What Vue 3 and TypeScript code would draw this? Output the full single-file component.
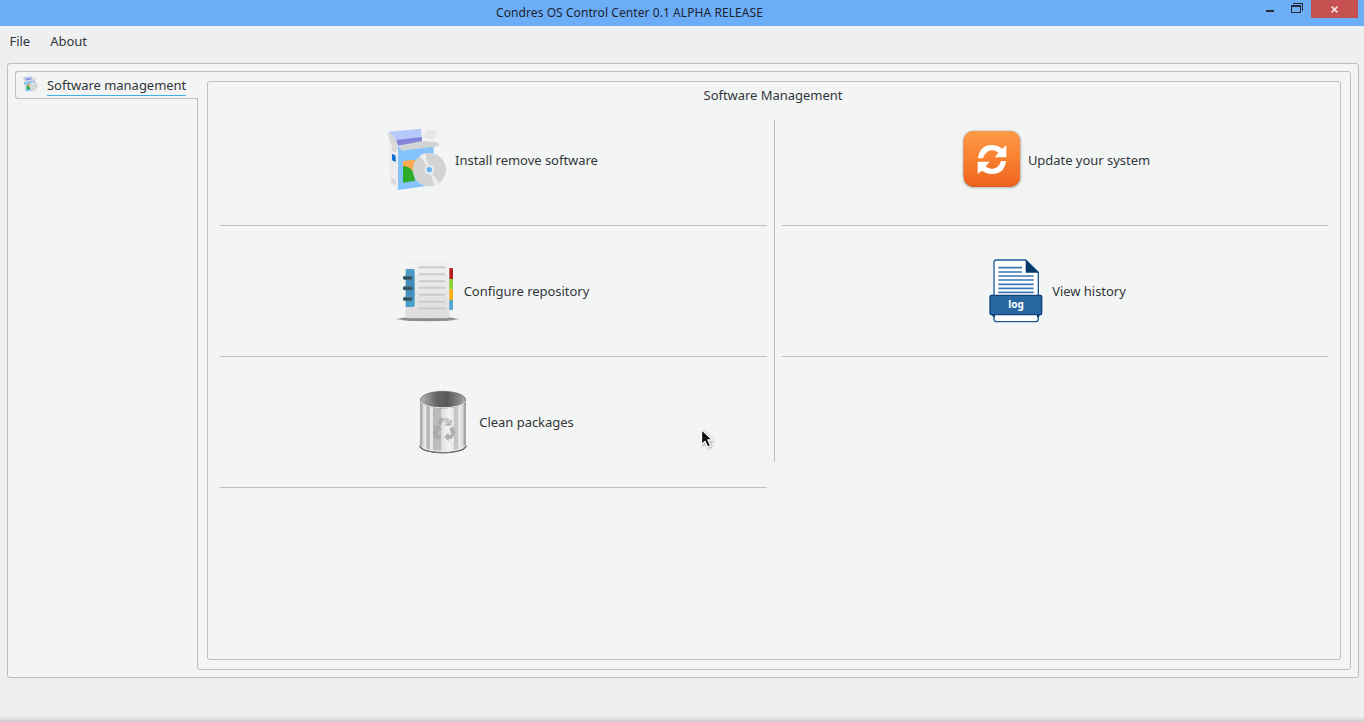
<script setup lang="ts">
type IconName = 'install' | 'update' | 'repository' | 'history' | 'clean'

interface Action {
  label: string
  icon: IconName
  viewBox: string
}

const leftActions: Action[] = [
  { label: 'Install remove software', icon: 'install', viewBox: '21 24 192 192' },
  { label: 'Configure repository', icon: 'repository', viewBox: '21 15 192 192' },
  { label: 'Clean packages', icon: 'clean', viewBox: '9 24 192 192' },
]

const rightActions: Action[] = [
  { label: 'Update your system', icon: 'update', viewBox: '15 18 192 192' },
  { label: 'View history', icon: 'history', viewBox: '12 21 192 192' },
]

const columns = [leftActions, rightActions]
</script>

<template>
  <div class="window">
    <svg class="defs" width="0" height="0" aria-hidden="true">
      <defs>
        <linearGradient id="orange" x1="0" y1="0" x2="0" y2="1">
          <stop offset="0" stop-color="#fd9b48" /><stop offset=".5" stop-color="#f9802f" /><stop offset="1" stop-color="#ee6420" />
        </linearGradient>
        <linearGradient id="paper" x1="0" y1="0" x2="0" y2="1">
          <stop offset="0" stop-color="#f3f3f3" /><stop offset="1" stop-color="#dcdcdc" />
        </linearGradient>
        <linearGradient id="ring" x1="0" y1="0" x2="0" y2="1">
          <stop offset="0" stop-color="#688894" /><stop offset=".5" stop-color="#234553" /><stop offset="1" stop-color="#55717c" />
        </linearGradient>
        <linearGradient id="spine" x1="0" y1="0" x2="0" y2="1">
          <stop offset="0" stop-color="#4d9fc9" /><stop offset=".5" stop-color="#3c8ab3" /><stop offset="1" stop-color="#4ba3cf" />
        </linearGradient>
        <linearGradient id="metal" x1="0" x2="1">
          <stop offset="0" stop-color="#858585" /><stop offset=".06" stop-color="#d8d8d8" /><stop offset=".13" stop-color="#eeeeee" />
          <stop offset=".14" stop-color="#b4b4b4" /><stop offset=".2" stop-color="#b4b4b4" /><stop offset=".21" stop-color="#e8e8e8" />
          <stop offset=".27" stop-color="#e6e6e6" /><stop offset=".28" stop-color="#bababa" /><stop offset=".45" stop-color="#bcbcbc" />
          <stop offset=".47" stop-color="#dedfe1" /><stop offset=".64" stop-color="#f4f4f6" /><stop offset=".74" stop-color="#e3e3e5" />
          <stop offset=".75" stop-color="#c4c4c4" /><stop offset=".83" stop-color="#c8c8c8" /><stop offset=".85" stop-color="#f0f0f0" />
          <stop offset=".94" stop-color="#d5d5d5" /><stop offset="1" stop-color="#7d7d7d" />
        </linearGradient>
        <linearGradient id="hollow" x1="0" x2="1">
          <stop offset="0" stop-color="#b4b4b4" /><stop offset=".18" stop-color="#8c8c8c" /><stop offset=".35" stop-color="#666666" />
          <stop offset=".6" stop-color="#585858" /><stop offset=".85" stop-color="#858585" /><stop offset="1" stop-color="#b0b0b0" />
        </linearGradient>
        <radialGradient id="ground">
          <stop offset="0" stop-color="#858585" /><stop offset=".8" stop-color="#909090" /><stop offset="1" stop-color="#aaaaaa" stop-opacity="0" />
        </radialGradient>
        <filter id="soft" x="-10%" y="-10%" width="120%" height="120%"><feGaussianBlur stdDeviation="2.6" /></filter>
        <symbol id="install" viewBox="21 24 192 192" overflow="visible">
          <path d="M26 35 123 26 126 67 50 75Z" fill="#b5c9fa" />
          <path d="M48 60 126 51 126 70 55 78Z" fill="#8583dc" />
          <path d="M144 28 172 33 161 60 128 53Z" fill="#e6e7e6" />
          <path d="M26 43 55 77 54 210 30 193Z" fill="#ececec" />
          <path d="M23 41 31 39 50 61 55 92 33 72Z" fill="#d8d8d8" />
          <path d="M54 79 161 68V195L54 210Z" fill="#84c3fb" />
          <path d="M54 77 126 63 174 67 178 78 66 92Z" fill="#d2d3d3" />
          <path d="M69 123 106 119 110 158 69 138Z" fill="#feaa4c" />
          <path d="M69 138C91 139 101 151 105 182L69 188Z" fill="#2eac29" />
          <path d="M36 101 47 107V126L36 121Z" fill="#096fd5" />
          <path d="M35 82 47 88M35 89 47 95M35 177 47 184M35 184 47 191" stroke="#a2a2a2" stroke-width="2" />
          <circle cx="148" cy="149" r="50" fill="#d3d3d3" />
          <path d="M148 149 120 107A50 50 0 0 1 136 100ZM148 149 177 190A50 50 0 0 1 163 197Z" fill="#eeeeee" />
          <circle cx="148" cy="149" r="15" fill="#e7e7e7" />
          <circle cx="148" cy="149" r="10.5" fill="#e9f4ff" />
          <circle cx="148" cy="149" r="8" fill="#65b2ef" />
        </symbol>
      </defs>
    </svg>

    <header class="titlebar">
      <span class="window-title">Condres OS Control Center 0.1 ALPHA RELEASE</span>
      <div class="controls">
        <svg class="window-buttons" viewBox="0 0 61 26" shape-rendering="crispEdges">
          <path d="M16 10h8v2h-8z" fill="#252a30" />
          <path d="M43 3h10v8h-1V4h-9z" fill="#252a30" />
          <path d="M41 5h10v8H41zM42 7v5h8V7z" fill="#252a30" fill-rule="evenodd" />
        </svg>
        <button class="close" aria-label="Close">
          <svg width="7" height="7" viewBox="0 0 7 7"><path d="M.6 .6 6.400 6.400M6.400 .6 .6 6.400" stroke="#f4e4e4" stroke-width="1.600" /></svg>
        </button>
      </div>
    </header>

    <nav class="menubar"><span>File</span><span>About</span></nav>

    <main class="frame">
      <aside class="tab">
        <svg class="tab-icon"><use href="#install" width="16" height="16" /></svg>
        <span class="tab-label">Software management</span>
      </aside>
      <section class="page">
        <div class="group">
          <h1>Software Management</h1>
          <div class="columns">
            <div v-for="(actions, index) in columns" :key="index" class="column">
              <div v-for="action in actions" :key="action.icon" class="cell" :class="action.icon">
                <svg class="icon" :viewBox="action.viewBox">
                  <use v-if="action.icon === 'install'" href="#install" x="21" y="24" width="192" height="192" />
                  <g v-else-if="action.icon === 'update'">
                    <rect x="24" y="27" width="174" height="171" rx="32" fill="#8b8b8b" opacity=".65" filter="url(#soft)" />
                    <rect x="26" y="27" width="169" height="168" rx="30" fill="#dd5c19" />
                    <rect x="26" y="27" width="169" height="165" rx="30" fill="url(#orange)" />
                    <g fill="#fff">
                      <path d="M69 109C72 82 88 69 110 69C122 69 133 73 141 80L154 70V106H119L130 93C119 81 94 80 84 109Z" />
                      <path d="M153 117C150 144 134 156 112 156C100 156 89 152 81 146L68 156V119H104L92 133C104 145 130 144 138 117Z" />
                    </g>
                  </g>
                  <g v-else-if="action.icon === 'repository'">
                    <ellipse cx="116" cy="195" rx="98" ry="8" fill="url(#ground)" />
                    <path d="M176 42h12q4 0 4 4v29h-16z" fill="#b51f28" />
                    <path d="M176 75h16v31h-16z" fill="#8bd233" />
                    <path d="M176 106h16v32h-16z" fill="#fbad0c" />
                    <path d="M176 138h16v26q0 4-4 4h-12z" fill="#51a7d2" />
                    <rect x="50" y="17" width="131" height="176" rx="9" fill="url(#paper)" />
                    <path d="M50 45h22q5 0 5 5v104q0 5-5 5H50z" fill="url(#spine)" />
                    <path d="M89 39.500h79M89 60.500h79M89 81.500h79M89 101.500h79M89 122.500h79M89 143h79M89 163.500h79" stroke="#cbcbcb" stroke-width="6" />
                    <rect x="42" y="65" width="28" height="13" rx="5" fill="url(#ring)" />
                    <rect x="42" y="96" width="28" height="13" rx="5" fill="url(#ring)" />
                    <rect x="42" y="128" width="28" height="13" rx="5" fill="url(#ring)" />
                  </g>
                  <g v-else-if="action.icon === 'history'">
                    <path d="M49 24h88l38 37v139q0 9-9 9H50q-8 0-8-9V32q0-8 7-8z" fill="#fff" stroke="#1d5c9a" stroke-width="4" />
                    <path d="M137 23 176 62H137Z" fill="#05396c" />
                    <path d="M55 47h71M55 60h71M55 72h106M55 84h106M55 97h106M55 109h106M55 121h106" stroke="#3d76b0" stroke-width="5" />
                    <path d="M31 187h14v10zM185 187h-14v10z" fill="#05396c" />
                    <rect x="30" y="130" width="155" height="58" rx="4" fill="#2866a0" stroke="#0c427a" stroke-width="4" />
                    <text x="108" y="167" text-anchor="middle" class="log">log</text>
                  </g>
                  <g v-else>
                    <ellipse cx="105" cy="193" rx="71" ry="21" fill="#727272" />
                    <path d="M37 53C37 22 173 22 173 53V188C173 217 37 217 37 188Z" fill="url(#metal)" />
                    <path d="M37 188C44 214 166 214 173 188" fill="none" stroke="#efefef" stroke-width="3" />
                    <path d="M35 192C43 219 167 219 175 192" fill="none" stroke="#737373" stroke-width="3" />
                    <ellipse cx="105" cy="53" rx="67" ry="25" fill="url(#hollow)" stroke="#5c5c5c" stroke-width="2" />
                    <path d="M39 57C46 84 164 84 171 57" fill="none" stroke="#ededed" stroke-width="3" />
                    <g fill="#a5a8ab" opacity=".85">
                      <path d="M88 123 96 110Q99 106 106 108L120 109 126 116 133 112 128 132 109 130 116 124 108 113 98 129Z" />
                      <path d="M104 108 120 108 129 122 116 127Z" fill="#c2c4c6" />
                      <path d="M75 132 93 128 102 145 94 143 88 155 98 159V172L84 171Q78 169 77 162L74 150 82 138Z" />
                      <path d="M124 140 135 133 142 149Q142 155 137 162L130 171H122V179L109 165 122 151V158H130Z" />
                    </g>
                  </g>
                </svg>
                <span>{{ action.label }}</span>
              </div>
            </div>
          </div>
        </div>
      </section>
    </main>

    <svg class="cursor" width="14" height="22" viewBox="0 0 14 22">
      <path d="M1.500 1.500V16.500L5 13.500 7.500 19 10.500 17.800 8 12H12.500Z" fill="#111" stroke="#fff" stroke-width="1.300" />
    </svg>
  </div>
</template>

<style>
html,
body {
  margin: 0;
  overflow: hidden;
}
</style>

<style scoped>
.window {
  position: relative;
  box-sizing: border-box;
  display: flex;
  flex-direction: column;
  width: 1364px;
  height: 722px;
  background: linear-gradient(#eeeff1 0 715px, #e5e6e7 718px, #c9c9c9 722px);
  color: #31363b;
  font: 13px/18px "Noto Sans", sans-serif;
  letter-spacing: -.03px;
}
.defs { position: absolute; }
.titlebar {
  position: relative;
  flex: none;
  height: 26px;
  background: #6cadf7;
  color: #1c2430;
  font-size: 12px;
  line-height: 26px;
  letter-spacing: .07px;
  text-align: center;
}
.window-title { margin-right: 105px; }
.controls {
  position: absolute;
  top: 0;
  right: 6px;
  display: flex;
}
.window-buttons {
  width: 61px;
  height: 26px;
}
.close {
  display: flex;
  align-items: center;
  justify-content: center;
  width: 47px;
  height: 18px;
  padding: 0;
  border: 0;
  background: #c75050;
}
.menubar {
  display: flex;
  flex: none;
  gap: 20px;
  height: 37px;
  box-sizing: border-box;
  padding: 6px 9.500px 0;
}
.frame {
  display: flex;
  box-sizing: border-box;
  width: 1352px;
  height: 615px;
  margin-left: 7px;
  padding: 7px;
  border: 1px solid #bdbfbf;
  border-radius: 3px;
  background: #f3f5f4;
}
.tab {
  z-index: 1;
  display: flex;
  flex: none;
  box-sizing: border-box;
  width: 183px;
  height: 28px;
  margin-right: -1px;
  padding: 4px 0 0 7px;
  border: 1px solid #bdbfbf;
  border-right: 0;
  border-radius: 3px 0 0 3px;
  background: #f3f5f4;
}
.tab-icon {
  flex: none;
  width: 16px;
  height: 16px;
  margin-right: 8px;
}
.tab-label {
  height: 19px;
  border-bottom: 1px solid #3daee9;
}
.page {
  box-sizing: border-box;
  width: 1154px;
  height: 599px;
  padding: 9px;
  border: 1px solid #bdbfbf;
  border-radius: 0 3px 3px 3px;
}
.group {
  box-sizing: border-box;
  width: 1134px;
  height: 579px;
  padding: 4px 12px 0;
  border: 1px solid #bdbfbf;
  border-radius: 3px;
}
h1 {
  height: 34px;
  margin: 0 2px 0 0;
  font: inherit;
  text-align: center;
}
.columns {
  display: grid;
  grid-template-columns: 554px 554px;
}
.column:first-child {
  padding-right: 7px;
}
.column:last-child {
  height: 342px;
  padding-left: 7px;
  border-left: 1px solid #bdbfbf;
  box-sizing: border-box;
}
.cell {
  display: flex;
  box-sizing: border-box;
  align-items: center;
  justify-content: center;
  gap: 4px;
  height: 131px;
  padding-right: 2px;
  border-bottom: 1px solid #bdbfbf;
}
.column:last-child .cell {
  padding-right: 0;
}
.cell:first-child {
  height: 106px;
  padding-bottom: 25px;
}
.icon {
  width: 64px;
  height: 64px;
  overflow: visible;
}
.log {
  fill: #fff;
  font: bold 30px "Noto Sans", sans-serif;
}
.cursor {
  position: absolute;
  top: 428px;
  left: 700px;
  filter: drop-shadow(1px 1px 1px #0005);
}
</style>
